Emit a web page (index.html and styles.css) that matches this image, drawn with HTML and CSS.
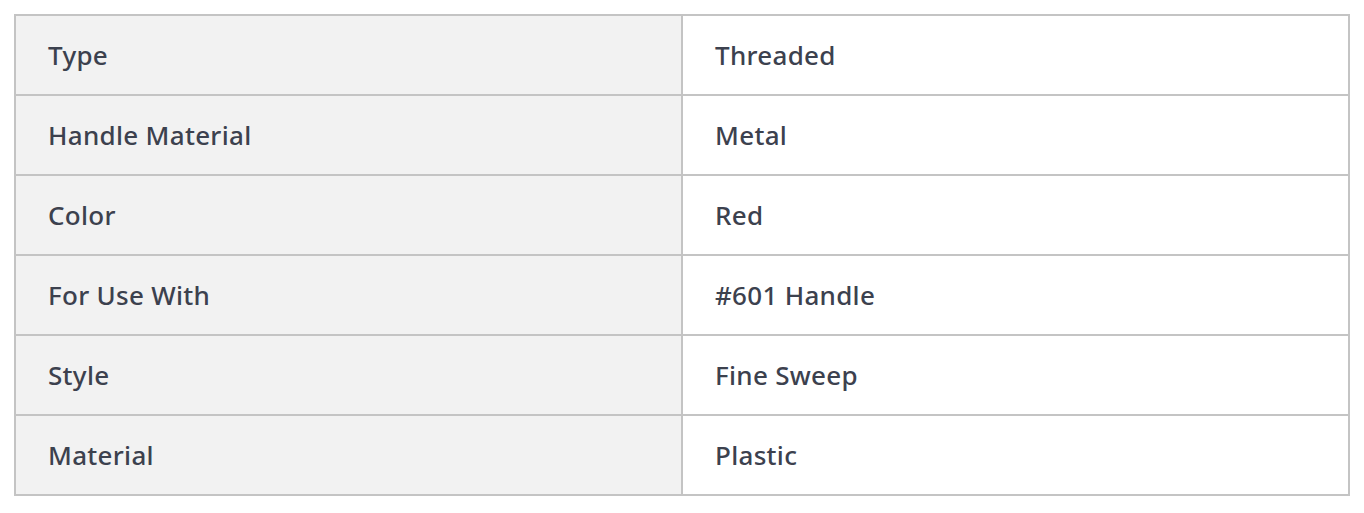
FILE: index.html
```html
<!DOCTYPE html>
<html>
<head>
<meta charset="utf-8">
<link rel="stylesheet" href="styles.css">
</head>
<body>
<div class="specs">
  <div class="label">Type</div><div class="value">Threaded</div>
  <div class="label">Handle Material</div><div class="value">Metal</div>
  <div class="label">Color</div><div class="value">Red</div>
  <div class="label">For Use With</div><div class="value">#601 Handle</div>
  <div class="label">Style</div><div class="value">Fine Sweep</div>
  <div class="label">Material</div><div class="value">Plastic</div>
</div>
</body>
</html>
```

FILE: styles.css
```css
html, body {
  margin: 0;
  padding: 0;
  background: #ffffff;
}

body {
  padding: 14px;
  font-family: "Noto Sans", "Open Sans", sans-serif;
}

.specs {
  width: 1336px;
  box-sizing: border-box;
  display: grid;
  grid-template-columns: 667px 667px;
  grid-auto-rows: 80px;
  border-top: 2px solid #c4c4c4;
  border-left: 2px solid #c4c4c4;
}

.label,
.value {
  display: flex;
  align-items: center;
  padding: 0 32px 1px 32px;
  border-right: 2px solid #c4c4c4;
  border-bottom: 2px solid #c4c4c4;
  font-size: 26px;
  font-weight: 500;
  letter-spacing: 0.3px;
  color: #3c414e;
  box-sizing: border-box;
}

.label {
  background: #f2f2f2;
}

.value {
  background: #ffffff;
}
```
